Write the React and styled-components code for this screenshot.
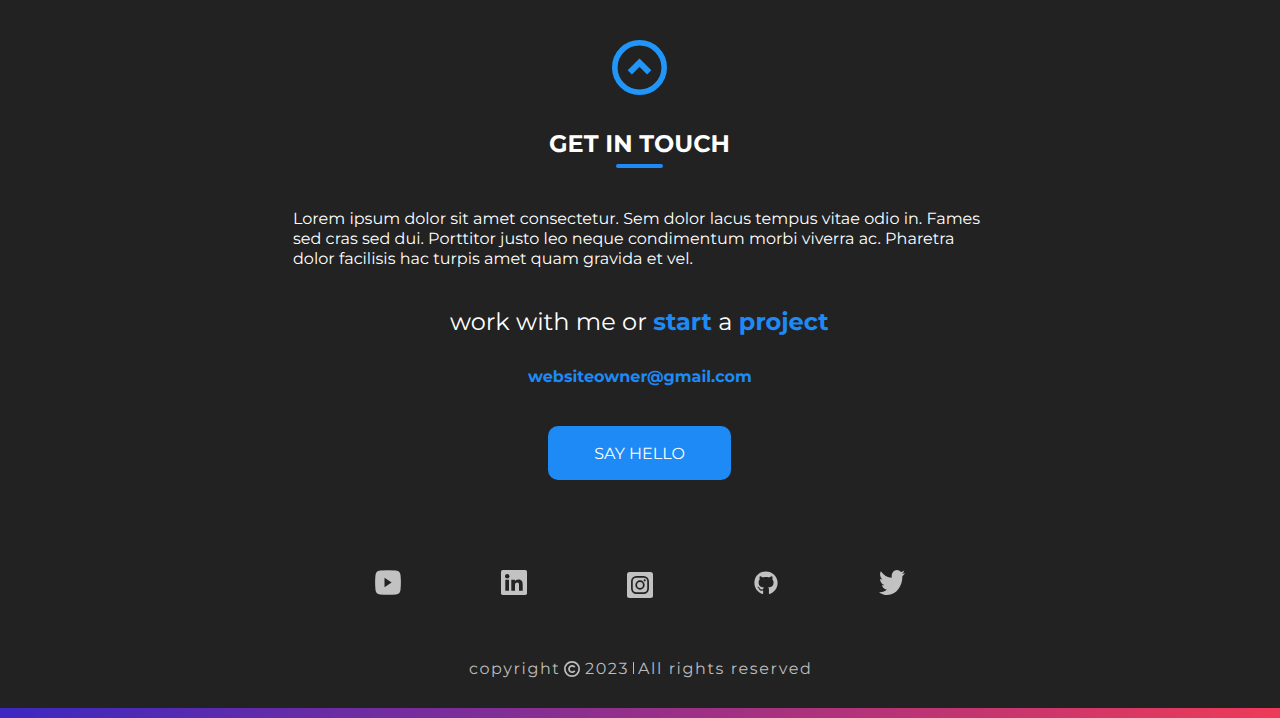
import React from "react";
import styled, { createGlobalStyle } from "styled-components";
import { FaGithub, FaTwitter } from "react-icons/fa";

const GlobalStyle = createGlobalStyle`
  * { box-sizing: border-box; }
  body { margin: 0; background: #222222; }
`;

const Page = styled.main`
  height: 718px;
  display: flex;
  flex-direction: column;
  align-items: center;
  padding-top: 40px;
  background: #222222;
  color: #ffffff;
  font-family: Montserrat, Inter, sans-serif;
  text-rendering: geometricPrecision;
  overflow: hidden;
  white-space: nowrap;
`;

const TopLink = styled.a`
  display: block;
  width: 55px;
  height: 55px;
  margin-right: 1px;
  svg { display: block; }
`;

const Heading = styled.h2`
  margin: 35px 1px 0 0;
  height: 30px;
  font-size: 24px;
  line-height: 30px;
  font-weight: 700;
`;

const Underline = styled.div`
  width: 47px;
  height: 4px;
  margin: 4px 1px 0 0;
  border-radius: 2px;
  background: #1e8af6;
`;

const Paragraph = styled.p`
  width: 694px;
  margin: 42px 0 0;
  font-size: 16px;
  line-height: 20px;
`;

const Line = styled.span`
  display: block;
  letter-spacing: ${(p) => p.$spacing}px;
`;

const Invite = styled.p`
  width: 380px;
  margin: 38px 0 0;
  font-size: 24px;
  line-height: 30px;
  letter-spacing: 0.03px;
`;

const Accent = styled.span`
  font-weight: 700;
  color: #1e8af6;
`;

const Email = styled.a`
  width: 224px;
  margin-top: 30px;
  font-size: 16px;
  line-height: 20px;
  font-weight: 700;
  color: #1e8af6;
`;

const Button = styled.button`
  width: 183px;
  height: 54px;
  margin: 38px 1px 0 0;
  padding: 3px 0 0;
  border: 0;
  border-radius: 10px;
  background: #1e8af6;
  color: #ffffff;
  font: 400 16px/20px Montserrat, Inter, sans-serif;
  text-rendering: inherit;
`;

const Socials = styled.nav`
  display: flex;
  justify-content: space-between;
  align-items: flex-start;
  width: 530px;
  height: 28px;
  margin-top: 90px;
  color: #c2c2c2;
`;

const Social = styled.a`
  display: flex;
  justify-content: center;
  width: 26px;
  padding-top: ${(p) => p.$drop || 0}px;
  svg { display: block; flex: none; }
`;

const TwitterIcon = styled(FaTwitter)`
  width: 26px;
  height: 25px;
`;

const Copyright = styled.p`
  display: flex;
  align-items: center;
  width: 342px;
  height: 20px;
  margin: 61px 0 0;
  font-size: 16px;
  line-height: 20px;
  letter-spacing: 1.6px;
  color: #bdbdbd;
  svg { flex: none; margin-right: 5px; }
`;

const Note = styled.span`
  flex: 0 0 ${(p) => p.$width}px;
  padding-top: 2px;
`;

const Divider = styled.span`
  flex: none;
  width: 1px;
  height: 12px;
  margin: 0 4px 2px 0;
  background: #bdbdbd;
`;

const GradientBar = styled.div`
  align-self: stretch;
  height: 10px;
  margin-top: auto;
  background: linear-gradient(90deg, #3c28c2, #952f8a 50%, #ee3a58);
`;

const UpIcon = () => (
  <svg width="55" height="55" viewBox="0 0 55 55" fill="none" stroke="#2196f9">
    <circle cx="27.5" cy="27.5" r="24.7" strokeWidth="5.6" />
    <path d="M17.8 32.4 27.5 22.700 37.200 32.400" strokeWidth="6" />
  </svg>
);

const YoutubeIcon = () => (
  <svg width="26" height="25" viewBox="0 0 26 25">
    <path fill="currentColor" fillRule="evenodd" d="M5 .5Q13 0 21 .5 25 .8 25.5 5 26.300 12.500 25.500 20 25 24.200 21 24.500 13 25 5 24.500 1 24.200.5 20-.3 12.500.5 5 1 .8 5 .5ZM9.500 7.800V17.200L16.600 12.500Z" />
  </svg>
);

const LinkedinIcon = () => (
  <svg width="26" height="25" viewBox="0 0 26 25">
    <rect width="26" height="25" rx="1.800" fill="currentColor" />
    <g fill="#222222">
      <circle cx="6.200" cy="6.300" r="2.200" />
      <path d="M4.300 9.700H8V20.800H4.300ZM10.300 9.700H13.900V11.200C14.500 10.200 15.800 9.400 17.400 9.400 21 9.400 21.700 11.800 21.700 14.800V20.800H18V15.300C18 13.900 17.900 12.500 16.200 12.500 14.400 12.500 14 13.800 14 15.200V20.800H10.300Z" />
    </g>
  </svg>
);

const InstagramIcon = () => (
  <svg width="26" height="26" viewBox="0 0 26 26">
    <rect width="26" height="26" rx="2.500" fill="currentColor" />
    <g fill="none" stroke="#222222" strokeWidth="1.700">
      <rect x="4.900" y="4.900" width="16.200" height="16.200" rx="4.500" />
      <circle cx="13" cy="13" r="3.800" />
    </g>
    <circle cx="17.700" cy="8.300" r="1.100" fill="#222222" />
  </svg>
);

const CopyrightIcon = () => (
  <svg width="16" height="16" viewBox="0 0 16 16" fill="none" stroke="currentColor" strokeWidth="1.700">
    <circle cx="8" cy="8" r="7.150" />
    <path d="M10.700 6.300A3.100 3.100 0 1 0 10.700 9.700" />
  </svg>
);

export default function App() {
  return (
    <>
      <GlobalStyle />
      <Page>
        <TopLink><UpIcon /></TopLink>
        <Heading>GET IN TOUCH</Heading>
        <Underline />
        <Paragraph>
          <Line $spacing={0.01}>Lorem ipsum dolor sit amet consectetur. Sem dolor lacus tempus vitae odio in. Fames</Line>
          <Line $spacing={0.022}>sed cras sed dui. Porttitor justo leo neque condimentum morbi viverra ac. Pharetra</Line>
          <Line $spacing={0.015}>dolor facilisis hac turpis amet quam gravida et vel.</Line>
        </Paragraph>
        <Invite>
          work with me or <Accent>start</Accent> a <Accent>project</Accent>
        </Invite>
        <Email>websiteowner@gmail.com</Email>
        <Button>SAY HELLO</Button>
        <Socials>
          <Social><YoutubeIcon /></Social>
          <Social><LinkedinIcon /></Social>
          <Social $drop={2}><InstagramIcon /></Social>
          <Social $drop={1}><FaGithub size={24} /></Social>
          <Social><TwitterIcon viewBox="0 48 512 416" preserveAspectRatio="none" /></Social>
        </Socials>
        <Copyright>
          <Note $width={95}>copyright</Note>
          <CopyrightIcon />
          <Note $width={48}>2023</Note>
          <Divider />
          <Note $width={174}>All rights reserved</Note>
        </Copyright>
        <GradientBar />
      </Page>
    </>
  );
}
